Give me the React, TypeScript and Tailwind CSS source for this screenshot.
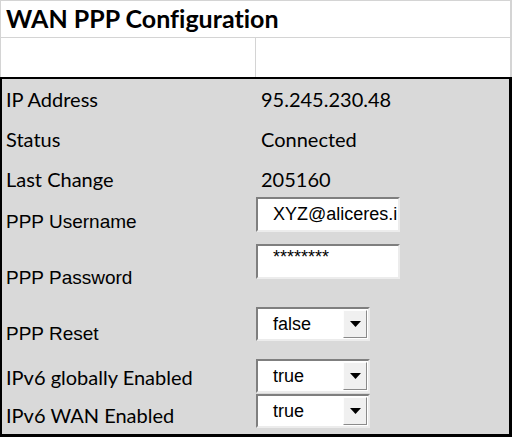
import React from "react";

const calibri = { fontFamily: "Lato, 'Open Sans', sans-serif" };

const Label = ({ children, arial, pt }: { children: React.ReactNode; arial?: boolean; pt: string }) => (
  <div
    className={`w-[254px] pl-[4px] leading-[20px] text-black whitespace-nowrap ${pt} ${
      arial ? "font-['Liberation_Sans',Arial,sans-serif] text-[19px]" : "font-['Lato',sans-serif] text-[20px]"
    }`}
  >
    {children}
  </div>
);

const TextBox = ({ value, mt, small }: { value: string; mt: string; small?: boolean }) => (
  <div
    className={`${mt} w-[144px] h-[35px] bg-white border-2 border-t-[#7f7f7f] border-l-[#7f7f7f] border-b-[#ececec] border-r-[#ececec] overflow-hidden`}
  >
    <div
      className={`pl-[15px] font-['Liberation_Sans',Arial,sans-serif] text-[18px] whitespace-nowrap text-black ${
        small ? "leading-[14px] pt-[4px]" : "leading-[20px] pt-[5px]"
      }`}
    >
      {value}
    </div>
  </div>
);

const Select = ({ value, mt }: { value: string; mt: string }) => (
  <div
    className={`${mt} w-[114px] h-[34px] bg-white border-2 border-t-[#7f7f7f] border-l-[#7f7f7f] border-b-[#ececec] border-r-[#ececec] flex items-center`}
  >
    <div className="flex-1 pl-[15px] font-['Liberation_Sans',Arial,sans-serif] text-[18px] leading-[20px] text-black">
      {value}
    </div>
    <div className="w-[24px] h-[28px] mr-[1px] bg-[#f0f0f0] border border-t-[#fdfdfd] border-l-[#fdfdfd] border-b-[#8a8a8a] border-r-[#8a8a8a] flex items-center justify-center">
      <svg width="11" height="6" viewBox="0 0 11 6">
        <path d="M0 0 L11 0 L5.5 6 Z" fill="#000" />
      </svg>
    </div>
  </div>
);

export default function App() {
  return (
    <div className="w-[512px] h-[437px] bg-white overflow-hidden [font-variant-ligatures:none]">
      <div className="border-l border-t border-r-2 border-[#d4d4d4]">
        <div className="h-[37px] border-b border-[#d4d4d4] pl-[5px] pt-[3px]">
          <span style={calibri} className="font-bold text-[25px] leading-[28px] text-black">
            WAN PPP Configuration
          </span>
        </div>
        <div className="flex h-[39px]">
          <div className="w-[255px] border-r border-[#d4d4d4]" />
          <div className="flex-1" />
        </div>
      </div>
      <div className="h-[360px] bg-[#d9d9d9] border-t-2 border-l-2 border-r-[3px] border-b-[3px] border-black">
        <div className="flex h-[41px]">
          <Label pt="pt-[10px]">IP Address</Label>
          <div className="pl-[5px] pt-[10px] font-['Lato',sans-serif] text-[20px] leading-[20px]">95.245.230.48</div>
        </div>
        <div className="flex h-[39px]">
          <Label pt="pt-[9px]">Status</Label>
          <div className="pl-[5px] pt-[9px] font-['Lato',sans-serif] text-[20px] leading-[20px]">Connected</div>
        </div>
        <div className="flex h-[36px]">
          <Label pt="pt-[10px]">Last Change</Label>
          <div className="pl-[5px] pt-[10px] font-['Lato',sans-serif] text-[20px] leading-[20px]">205160</div>
        </div>
        <div className="flex h-[44px]">
          <Label arial pt="pt-[17px]">PPP Username</Label>
          <TextBox value="XYZ@aliceres.i" mt="mt-[2px]" />
        </div>
        <div className="flex h-[56px]">
          <Label arial pt="pt-[29px]">PPP Password</Label>
          <TextBox value="********" mt="mt-[5px]" small />
        </div>
        <div className="flex h-[56px]">
          <Label arial pt="pt-[29px]">PPP Reset</Label>
          <Select value="false" mt="mt-[12px]" />
        </div>
        <div className="flex h-[42px]">
          <Label pt="pt-[16px]">IPv6 globally Enabled</Label>
          <Select value="true" mt="mt-[8px]" />
        </div>
        <div className="flex h-[40px]">
          <Label pt="pt-[12px]">IPv6 WAN Enabled</Label>
          <Select value="true" mt="mt-[1px]" />
        </div>
      </div>
    </div>
  );
}
